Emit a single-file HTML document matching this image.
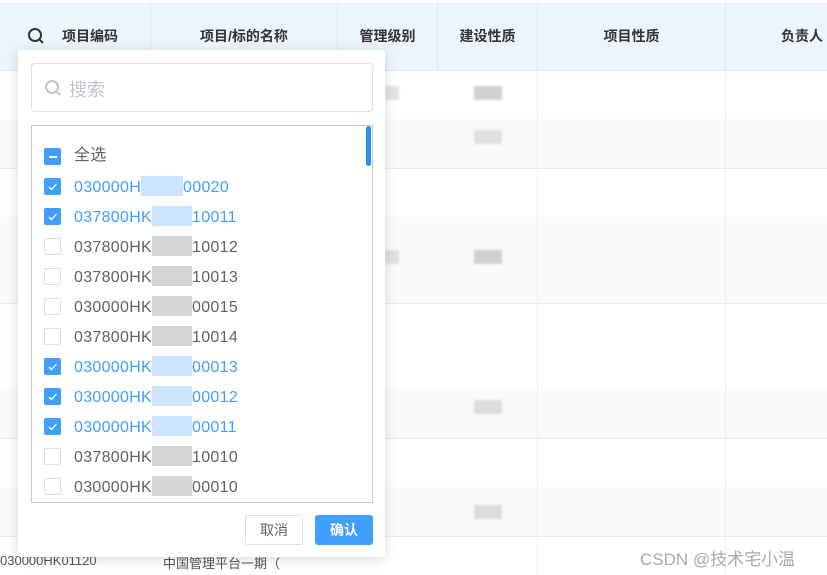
<!DOCTYPE html><html><head><meta charset="utf-8"><style>
body{margin:0;width:827px;height:575px;overflow:hidden;background:#fff;font-family:"Liberation Sans","Noto Sans CJK SC",sans-serif;position:relative}
.hd{position:absolute;left:0;top:3px;width:827px;height:67px;background:#ecf4fe;border-bottom:1px solid #e4e8ef}
.th{position:absolute;top:3px;height:67px;line-height:67px;text-align:center;font-size:14px;font-weight:bold;color:#333;border-right:1px solid #e0e6ef;box-sizing:border-box}
.row{position:absolute;left:0;width:827px;border-bottom:1px solid #e8eaf0}
.vl{position:absolute;top:70px;height:505px;width:1px;background:#eceef3}
.pop{position:absolute;left:18px;top:50px;width:367px;height:507px;background:#fff;box-shadow:0 2px 12px rgba(0,0,0,.15);border-radius:3px}
.it{position:absolute;left:44px;font-size:16px;color:#606266;height:20px;line-height:20px}
.cb{position:absolute;left:0;top:2px;width:17px;height:17px;border:1px solid #dcdfe6;border-radius:2px;box-sizing:border-box;background:#fff}
.on .cb{background:#409eff;border-color:#409eff}
.on{color:#409eff}
.t{position:absolute;left:30px;top:0;white-space:nowrap;letter-spacing:.3px}
.g{position:absolute;background:#d0d0d0;filter:blur(1px)}
</style></head><body>
<div class="hd"></div>
<div class="th" style="left:0;width:151px"><span style="margin-left:30px">项目编码</span></div>
<svg style="position:absolute;left:27px;top:27px" width="18" height="18" viewBox="0 0 18 18"><circle cx="8" cy="8" r="6" fill="none" stroke="#333" stroke-width="2"/><path d="M12.5 12.5L16 16" stroke="#333" stroke-width="2"/></svg>
<div class="th" style="left:151px;width:187px">项目/标的名称</div>
<div class="th" style="left:338px;width:100px">管理级别</div>
<div class="th" style="left:438px;width:100px">建设性质</div>
<div class="th" style="left:538px;width:188px">项目性质</div>
<div class="th" style="left:726px;width:101px;text-align:left;padding-left:55px;border:none">负责人</div>
<div class="row" style="top:70px;height:49px"></div>
<div class="row" style="top:119px;height:49px;background:#fafafa"></div>
<div class="row" style="top:168px;height:49px"></div>
<div class="row" style="top:217px;height:86px;background:#fafafa"></div>
<div class="row" style="top:303px;height:86px"></div>
<div class="row" style="top:389px;height:49px;background:#fafafa"></div>
<div class="row" style="top:438px;height:49px"></div>
<div class="row" style="top:487px;height:49px;background:#fafafa"></div>
<div class="vl" style="left:537px"></div><div class="vl" style="left:725px"></div>
<div class="g" style="left:474px;top:86px;width:28px;height:14px"></div>
<div class="g" style="left:474px;top:130px;width:28px;height:14px;opacity:.6"></div>
<div class="g" style="left:474px;top:250px;width:28px;height:14px"></div>
<div class="g" style="left:474px;top:400px;width:28px;height:14px;opacity:.7"></div>
<div class="g" style="left:474px;top:505px;width:28px;height:14px;opacity:.7"></div>
<div class="g" style="left:385px;top:86px;width:14px;height:14px;opacity:.6"></div>
<div class="g" style="left:385px;top:250px;width:14px;height:14px;opacity:.6"></div>
<div style="position:absolute;left:0;top:553px;font-size:13px;color:#555">030000HK01120</div>
<div style="position:absolute;left:163px;top:553px;font-size:13px;color:#555">中国管理平台一期（</div>
<div style="position:absolute;left:640px;top:545px;font-size:17px;color:#aaa">CSDN @技术宅小温</div>
<div class="pop">
<div style="position:absolute;left:13px;top:13px;width:342px;height:49px;border:1px solid #dcdfe6;border-radius:4px;box-sizing:border-box"></div>
<svg style="position:absolute;left:26px;top:29px" width="18" height="18" viewBox="0 0 18 18"><circle cx="8" cy="8" r="6" fill="none" stroke="#c0c4cc" stroke-width="2"/><path d="M12.5 12.5L16 16" stroke="#c0c4cc" stroke-width="2"/></svg>
<div style="position:absolute;left:51px;top:26px;font-size:18px;color:#c0c4cc">搜索</div>
<div style="position:absolute;left:13px;top:75px;width:342px;height:378px;border:1px solid #c8c8c8;box-sizing:border-box"></div>
<div style="position:absolute;left:348px;top:76px;width:5px;height:40px;background:#2d8cf0;border-radius:3px"></div>
</div>
<div class="it" style="top:146px"><div class="cb" style="background:#409eff;border-color:#409eff"><div style="position:absolute;left:4px;top:7px;width:8px;height:2px;background:#fff"></div></div><span class="t">全选</span></div>
<div id="L"></div>
<script>
var d=[[1,"030000H","00020",42],[1,"037800HK","10011",40],[0,"037800HK","10012",40],[0,"037800HK","10013",40],[0,"030000HK","00015",40],[0,"037800HK","10014",40],[1,"030000HK","00013",40],[1,"030000HK","00012",40],[1,"030000HK","00011",40],[0,"037800HK","10010",40],[0,"030000HK","00010",40]];
var h="";d.forEach(function(r,i){var y=176+i*30;h+='<div class="it'+(r[0]?' on':'')+'" style="top:'+y+'px"><div class="cb">'+(r[0]?'<svg width="15" height="15" style="position:absolute;left:0;top:0"><path d="M4 8L6.5 10.5L11.5 5" fill="none" stroke="#fff" stroke-width="1.3"/></svg>':'')+'</div><span class="t">'+r[1]+'<span style="display:inline-block;width:'+r[3]+'px;height:20px;vertical-align:-4px;background:'+(r[0]?'#cde4ff':'#d5d5d5')+'"></span>'+r[2]+'</span></div>'});
document.getElementById("L").innerHTML=h;
</script>
<div style="position:absolute;left:245px;top:515px;width:58px;height:30px;border:1px solid #dcdfe6;border-radius:3px;box-sizing:border-box;text-align:center;line-height:28px;font-size:14px;color:#606266">取消</div>
<div style="position:absolute;left:315px;top:515px;width:58px;height:30px;background:#409eff;border-radius:3px;text-align:center;line-height:30px;font-size:14px;color:#fff;font-weight:bold">确认</div>
</body></html>
